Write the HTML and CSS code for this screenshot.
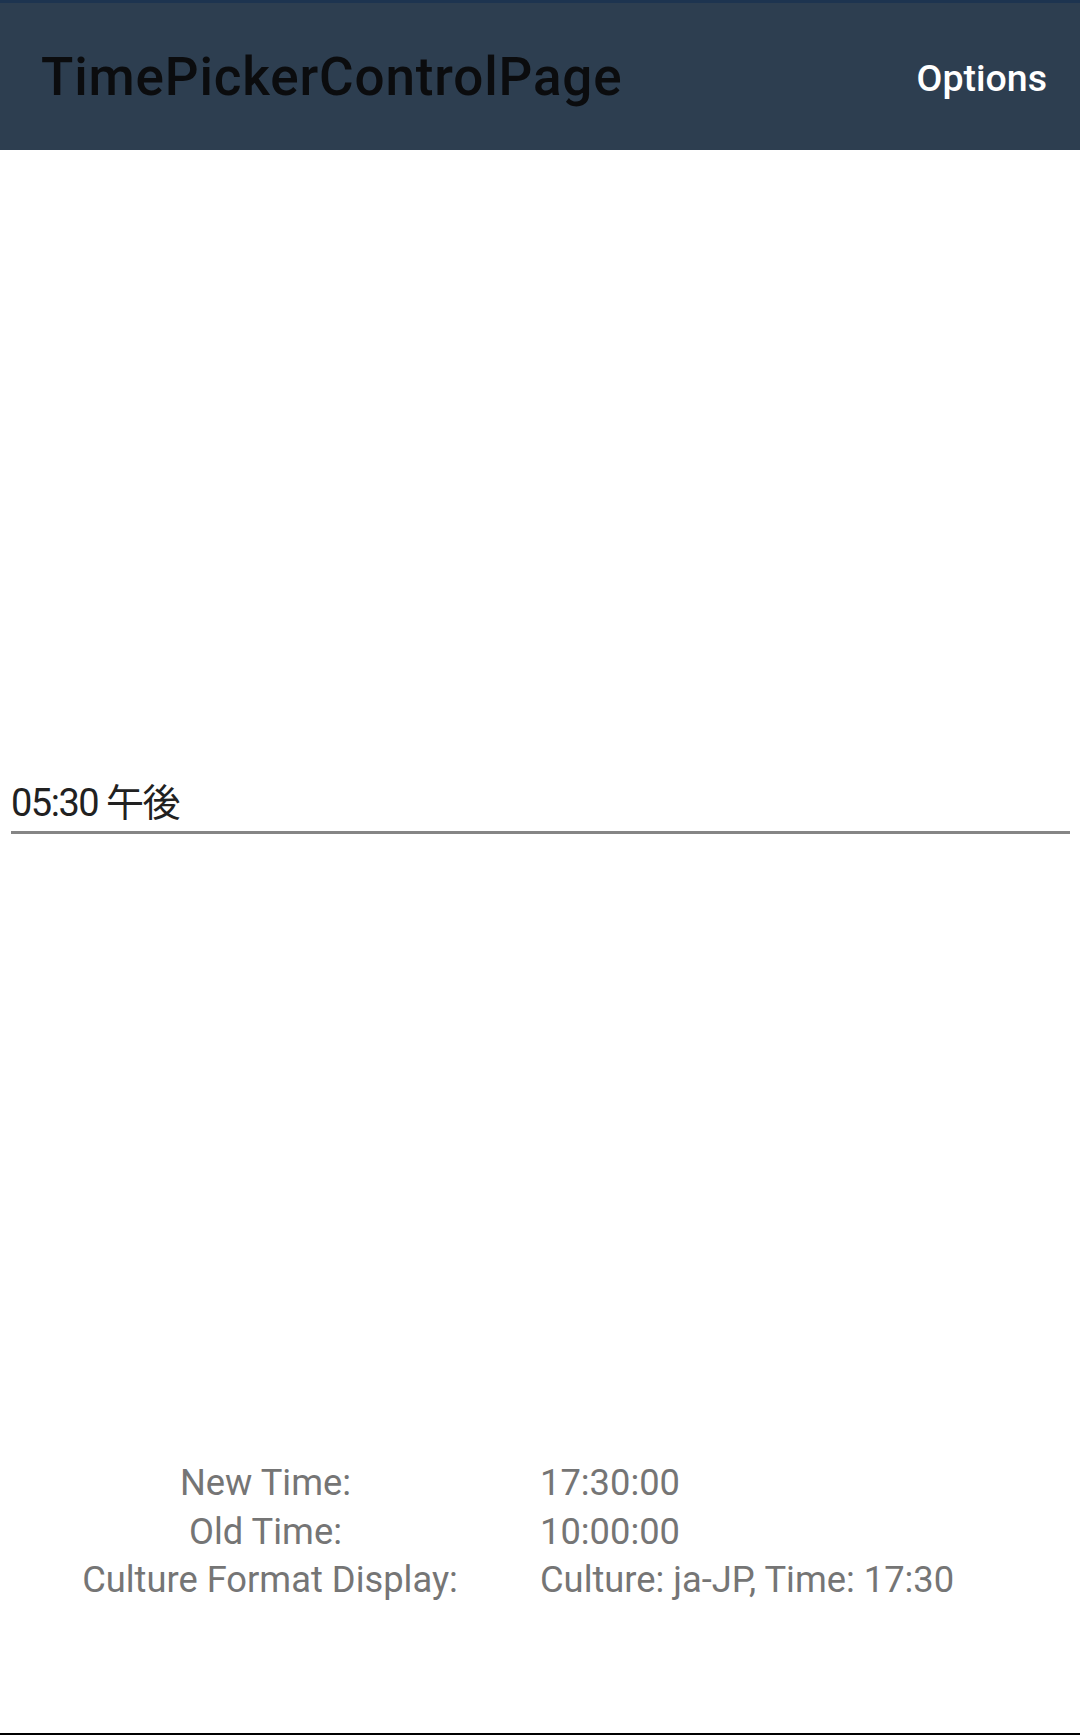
FILE: index.html
```html
<!DOCTYPE html>
<html lang="ja">
<head>
<meta charset="utf-8">
<title>TimePickerControlPage</title>
<link rel="stylesheet" href="styles.css">
</head>
<body>
<header class="toolbar">
  <div class="toolbar-title">TimePickerControlPage</div>
  <div class="toolbar-action">Options</div>
</header>
<main class="content">
  <div class="time-entry">05:30 午後</div>
  <div class="info-grid">
    <div class="info-label info-label-short">New Time:</div>
    <div class="info-value">17:30:00</div>
    <div class="info-label info-label-short">Old Time:</div>
    <div class="info-value">10:00:00</div>
    <div class="info-label">Culture Format Display:</div>
    <div class="info-value">Culture: ja-JP, Time: 17:30</div>
  </div>
</main>
</body>
</html>
```

FILE: styles.css
```css
html, body {
  margin: 0;
  padding: 0;
  background: #ffffff;
}

body {
  width: 1080px;
  font-family: Roboto, "Noto Sans CJK JP", sans-serif;
}

.toolbar {
  box-sizing: border-box;
  height: 150px;
  border-top: 3px solid #1d3450;
  background: #2d3e50;
  display: flex;
  justify-content: space-between;
  align-items: flex-start;
}

.toolbar-title {
  margin-top: 48px;
  margin-left: 41px;
  font-size: 53px;
  line-height: 53px;
  font-weight: 500;
  letter-spacing: 0.85px;
  color: #0b0c0e;
}

.toolbar-action {
  margin-top: 56px;
  margin-right: 33px;
  font-size: 37.5px;
  line-height: 38px;
  font-weight: 500;
  color: #ffffff;
}

.content {
  box-sizing: border-box;
  height: 1585px;
  border-bottom: 2px solid #000000;
  display: flex;
  flex-direction: column;
}

.time-entry {
  margin-top: 630px;
  margin-left: 11px;
  width: 1059px;
  padding-bottom: 5px;
  border-bottom: 3px solid #858585;
  font-family: Roboto, "Noto Sans CJK JP", sans-serif;
  font-size: 38px;
  line-height: 46px;
  letter-spacing: -1.5px;
  color: #212121;
}

.info-grid {
  margin-top: 625px;
  display: grid;
  grid-template-columns: 540px 540px;
  font-size: 36.3px;
  line-height: 48.6px;
  color: #757575;
}

.info-label {
  text-align: center;
}

.info-label-short {
  padding-right: 9px;
}

.info-value {
  text-align: left;
}
```
